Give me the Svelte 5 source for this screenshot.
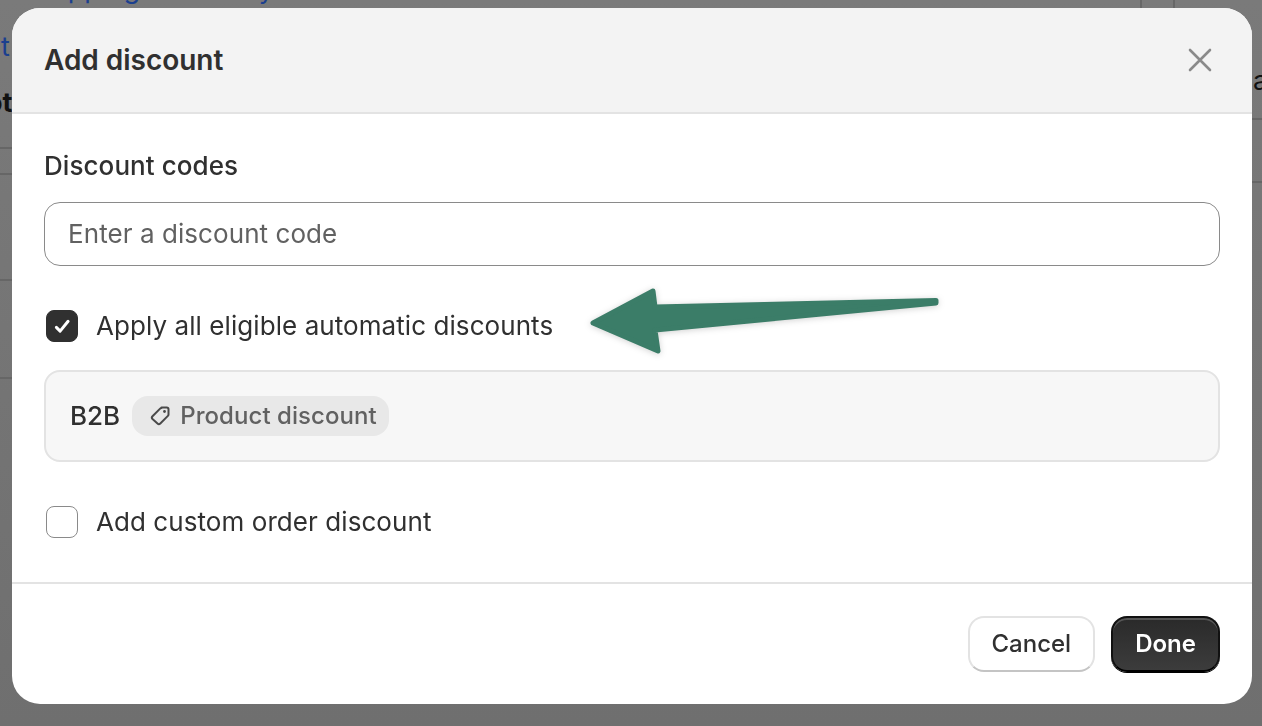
<script>
  const lines = [
    { left: 0, top: 147, width: 12 },
    { left: 0, top: 173, width: 12 },
    { left: 0, top: 279, width: 12 },
    { left: 0, top: 377, width: 12 },
    { left: 1252, top: 118, width: 10 },
    { left: 1252, top: 181, width: 10 }
  ];
</script>

<div class="backdrop">
  <span class="bg-text top-link">Shipping & delivery</span>
  <span class="bg-text left-link">t</span>
  <span class="bg-text left-dark">ot</span>
  <span class="bg-text right-dark">a</span>
  <i class="v v1"></i>
  <i class="v v2"></i>
  {#each lines as l}
    <i class="h" style="left:{l.left}px;top:{l.top}px;width:{l.width}px"></i>
  {/each}
</div>

<main class="page">
  <section class="modal">
    <header class="head">
      <h2>Add discount</h2>
      <svg class="close" viewBox="0 0 24 24" width="24" height="24" fill="none" stroke="#8a8a8a" stroke-width="2.6" stroke-linecap="round"><path d="M2 2 22 22M22 2 2 22" /></svg>
    </header>

    <div class="body">
      <label class="field-label" for="code">Discount codes</label>
      <div class="input" id="code">Enter a discount code</div>

      <div class="check-row first">
        <span class="box on">
          <svg viewBox="0 0 32 32" width="32" height="32" fill="none" stroke="#fff" stroke-width="3.2" stroke-linecap="round" stroke-linejoin="round"><path d="M10 17.5 14 21.5 22.5 11" /></svg>
        </span>
        <span>Apply all eligible automatic discounts</span>
      </div>

      <div class="panel">
        <span class="b2b">B2B</span>
        <span class="tag">
          <svg viewBox="0 0 24 24" width="24" height="24" fill="none" stroke="#4a4a4a" stroke-width="2" stroke-linejoin="round"><path d="M13.5 3.5h5.2a1.8 1.8 0 0 1 1.8 1.8v5.2a2 2 0 0 1-.6 1.4l-7.6 7.6a2 2 0 0 1-2.8 0L4.5 15a2 2 0 0 1 0-2.8l7.6-7.6a2 2 0 0 1 1.4-.6Z" /><circle cx="16.5" cy="7.5" r="1.4" fill="#4a4a4a" stroke="none" /></svg>
          Product discount
        </span>
      </div>

      <div class="check-row second">
        <span class="box"></span>
        <span>Add custom order discount</span>
      </div>
    </div>

    <footer class="foot">
      <button class="btn cancel">Cancel</button>
      <button class="btn done">Done</button>
    </footer>

    <svg class="arrow" viewBox="0 0 370 90" width="370" height="90">
      <path d="M356 25.5 75 32 73 16 13 48 78 76 75 55 356 28Z" fill="#3b7d68" stroke="#3b7d68" stroke-width="5" stroke-linejoin="round" />
    </svg>
  </section>
</main>

<style>
  :global(body) {
    margin: 0;
    background: #757575;
    font-family: Inter, "Liberation Sans", sans-serif;
    overflow: hidden;
  }
  .backdrop {
    position: fixed;
    inset: 0;
    background: linear-gradient(180deg, #7a7a7a 0%, #6f6f6f 100%);
    overflow: hidden;
  }
  .bg-text {
    position: absolute;
    font-size: 27px;
    line-height: 32px;
    white-space: nowrap;
  }
  .top-link { left: 28px; top: -27px; color: #1b3f8f; }
  .left-link { left: 1px; top: 31px; color: #1b3f8f; }
  .left-dark { left: -14px; top: 87px; color: #111; font-weight: 650; }
  .right-dark { left: 1253px; top: 65px; color: #111; }
  .v { position: absolute; top: 0; height: 8px; width: 2px; background: #676767; }
  .v1 { left: 1140px; }
  .v2 { left: 1173px; }
  .h { position: absolute; height: 2px; background: #666; }

  .page {
    position: relative;
    padding: 8px 10px 0 12px;
  }
  .modal {
    position: relative;
    background: #fff;
    border-radius: 28px;
    height: 696px;
    display: flex;
    flex-direction: column;
    overflow: hidden;
    color: #303030;
  }
  .head {
    height: 104px;
    box-sizing: content-box;
    background: #f3f3f3;
    border-bottom: 2px solid #e3e3e3;
    display: flex;
    align-items: center;
    justify-content: space-between;
    padding: 0 40px 0 32px;
    flex: none;
  }
  h2 {
    margin: 0;
    font-size: 28px;
    font-weight: 600;
    line-height: 40px;
    letter-spacing: -0.03px;
  }
  .body {
    flex: 1;
    padding: 32px 32px 0;
    font-size: 26px;
    line-height: 40px;
    letter-spacing: 0.07px;
  }
  .field-label {
    display: block;
    font-weight: 550;
    height: 40px;
  }
  .input {
    margin-top: 16px;
    height: 62px;
    border: 1px solid #8a8a8a;
    border-radius: 16px;
    padding: 0 23px;
    display: flex;
    align-items: center;
    color: #616161;
  }
  .check-row {
    display: flex;
    align-items: center;
    gap: 18px;
    padding-left: 2px;
  }
  .first { margin-top: 40px; }
  .second { margin-top: 40px; }
  .box {
    width: 32px;
    height: 32px;
    box-sizing: border-box;
    border: 1.5px solid #8a8a8a;
    border-radius: 8px;
    display: flex;
    align-items: center;
    justify-content: center;
    background: #fff;
    flex: none;
  }
  .box.on {
    background: #303030;
    border-color: #303030;
  }
  .panel {
    margin-top: 24px;
    height: 88px;
    background: #f7f7f7;
    border: 2px solid #e3e3e3;
    border-radius: 16px;
    padding: 0 24px;
    display: flex;
    align-items: center;
    gap: 12px;
    font-weight: 500;
  }
  .b2b { font-weight: 550; letter-spacing: 0; }
  .tag {
    display: flex;
    align-items: center;
    gap: 8px;
    height: 40px;
    padding: 0 12px 0 16px;
    border-radius: 16px;
    background: #e8e8e8;
    color: #616161;
    font-size: 24px;
    font-weight: 550;
    letter-spacing: 0.06px;
  }
  .foot {
    flex: none;
    box-sizing: content-box;
    border-top: 2px solid #e3e3e3;
    display: flex;
    justify-content: flex-end;
    gap: 16px;
    padding: 32px 32px 32px;
    height: 56px;
  }
  .btn {
    font: 600 24px/40px Inter, "Liberation Sans", sans-serif;
    height: 56px;
    border-radius: 16px;
    padding: 0 22px;
  }
  .cancel {
    background: #fff;
    color: #303030;
    font-weight: 550;
    border: 2px solid #e3e3e3;
    border-bottom-color: #c4c4c4;
  }
  .done {
    background: linear-gradient(180deg, #2a2a2a 0%, #3c3c3c 100%);
    color: #fff;
    border: 2px solid #111;
    border-bottom-color: #000;
    box-shadow: inset 0 2px 0 #555, 0 1px 0 #000;
  }
  .arrow {
    position: absolute;
    left: 568px;
    top: 267px;
    filter: drop-shadow(0 1px 3px rgba(0, 0, 0, 0.18));
  }
</style>
